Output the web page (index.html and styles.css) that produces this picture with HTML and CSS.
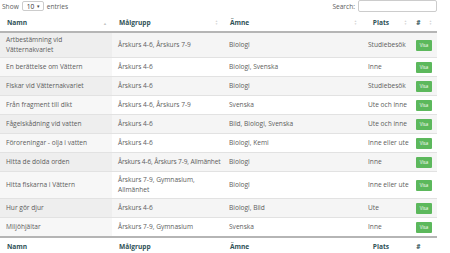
FILE: index.html
```html
<!DOCTYPE html>
<html lang="sv">
<head>
<meta charset="utf-8">
<link rel="stylesheet" href="styles.css">
</head>
<body>
<div class="wrap">
  <div class="top">
    <label class="len">Show <span class="sel">10 <span class="caret">&#9662;</span></span> entries</label>
    <label class="search">Search: <span class="inp"></span></label>
  </div>
  <table class="tbl">
    <colgroup><col class="c1"><col class="c2"><col class="c3"><col class="c4"><col class="c5"></colgroup>
    <thead>
      <tr>
        <th><span class="th">Namn</span><span class="sort asc">&#9650;</span></th>
        <th><span class="th">Målgrupp</span><span class="sort both"><i>&#9650;</i><i>&#9660;</i></span></th>
        <th><span class="th">Ämne</span><span class="sort both"><i>&#9650;</i><i>&#9660;</i></span></th>
        <th class="ctr"><span class="th">Plats</span><span class="sort both"><i>&#9650;</i><i>&#9660;</i></span></th>
        <th class="ctr"><span class="th">#</span><span class="sort both"><i>&#9650;</i><i>&#9660;</i></span></th>
      </tr>
    </thead>
    <tbody>
      <tr class="odd"><td>Artbestämning vid Vätternakvariet</td><td>Årskurs 4-6, Årskurs 7-9</td><td>Biologi</td><td>Studiebesök</td><td><span class="btn">Visa</span></td></tr>
      <tr class="even"><td>En berättelse om Vättern</td><td>Årskurs 4-6</td><td>Biologi, Svenska</td><td>Inne</td><td><span class="btn">Visa</span></td></tr>
      <tr class="odd"><td>Fiskar vid Vätternakvariet</td><td>Årskurs 4-6</td><td>Biologi</td><td>Studiebesök</td><td><span class="btn">Visa</span></td></tr>
      <tr class="even"><td>Från fragment till dikt</td><td>Årskurs 4-6, Årskurs 7-9</td><td>Svenska</td><td>Ute och inne</td><td><span class="btn">Visa</span></td></tr>
      <tr class="odd"><td>Fågelskådning vid vatten</td><td>Årskurs 4-6</td><td>Bild, Biologi, Svenska</td><td>Ute och inne</td><td><span class="btn">Visa</span></td></tr>
      <tr class="even"><td>Föroreningar - olja i vatten</td><td>Årskurs 4-6</td><td>Biologi, Kemi</td><td>Inne eller ute</td><td><span class="btn">Visa</span></td></tr>
      <tr class="odd"><td>Hitta de dolda orden</td><td class="nw">Årskurs 4-6, Årskurs 7-9, Allmänhet</td><td>Biologi</td><td>Inne</td><td><span class="btn">Visa</span></td></tr>
      <tr class="even tall"><td>Hitta fiskarna i Vättern</td><td>Årskurs 7-9, Gymnasium, Allmänhet</td><td>Biologi</td><td>Inne eller ute</td><td><span class="btn">Visa</span></td></tr>
      <tr class="odd"><td>Hur gör djur</td><td>Årskurs 4-6</td><td>Biologi, Bild</td><td>Ute</td><td><span class="btn">Visa</span></td></tr>
      <tr class="even"><td>Miljöhjältar</td><td>Årskurs 7-9, Gymnasium</td><td>Svenska</td><td>Inne</td><td><span class="btn">Visa</span></td></tr>
    </tbody>
    <tfoot>
      <tr><th>Namn</th><th>Målgrupp</th><th>Ämne</th><th class="ctr">Plats</th><th class="ctr">#</th></tr>
    </tfoot>
  </table>
</div>
</body>
</html>
```
FILE: styles.css
```css
html, body { margin: 0; padding: 0; background: #fff; }
body {
  font-family: "Open Sans", "Noto Sans", sans-serif;
  font-size: 6.6px;
  color: #5c5c5c;
}
.wrap { padding: 0 13px 0 0; }
.top {
  display: flex;
  justify-content: space-between;
  align-items: center;
  height: 12px;
  margin-bottom: 3px;
}
.len { display: flex; align-items: center; gap: 3px; padding-left: 2px; }
.sel {
  display: inline-flex;
  align-items: center;
  justify-content: space-between;
  width: 22px;
  height: 10px;
  box-sizing: border-box;
  border: 1px solid #ccc;
  border-radius: 2px;
  padding: 0 3px 0 4px;
  color: #333;
  background: #fff;
}
.caret { font-size: 5px; color: #444; }
.search { display: flex; align-items: center; gap: 3px; }
.inp {
  display: inline-block;
  width: 79px;
  height: 12px;
  box-sizing: border-box;
  border: 1px solid #ccc;
  border-radius: 2px;
}
.tbl {
  width: 437px;
  border-collapse: collapse;
  table-layout: fixed;
}
.c1 { width: 112px; }
.c2 { width: 111px; }
.c3 { width: 139px; }
.c4 { width: 50px; }
.c5 { width: 25px; }
thead th {
  position: relative;
  text-align: left;
  font-weight: 700;
  color: #2f5257;
  padding: 4px 14px 4px 7px;
  height: 8px;
  line-height: 8px;
  border-bottom: 2px solid #b5b5b5;
}
thead th.ctr { text-align: center; padding-left: 0; padding-right: 12px; }
.sort {
  position: absolute;
  right: 5px;
  top: 50%;
  transform: translateY(-50%);
  color: #d3d3d3;
  font-size: 3px;
  line-height: 3px;
  display: flex;
  flex-direction: column;
}
.sort.asc { color: #c4c4c4; font-size: 4px; }
.sort i { font-style: normal; display: block; }
tbody td {
  padding: 2px 0 2px 6px;
  line-height: 10px;
  vertical-align: middle;
  border-top: 1px solid #e2e2e2;
}
tbody tr:first-child td { border-top: none; }
tbody tr.tall td { padding-top: 3px; padding-bottom: 3px; }
tbody td:nth-child(1) { padding-right: 14px; }
tbody td.nw { white-space: nowrap; letter-spacing: -0.15px; }
tbody td:nth-child(4) { padding-left: 6px; padding-right: 1px; }
tbody td:nth-child(5) { padding: 2px 2px 2px 4px; }
tr.odd td { background: #f5f5f5; }
tr.odd td:first-child { background: #eeeeee; }
tr.even td { background: #fff; }
tr.even td:first-child { background: #f7f7f7; }
.btn {
  display: flex;
  align-items: center;
  justify-content: center;
  width: 16px;
  height: 11px;
  margin: 1.5px 0;
  background: #5cb85c;
  color: #fff;
  font-size: 4.5px;
  line-height: 11px;
  border-radius: 1px;
}
tfoot th {
  text-align: left;
  font-weight: 700;
  color: #2f5257;
  padding: 5px 7px;
  line-height: 8px;
  border-top: 2px solid #b5b5b5;
}
tfoot th.ctr { text-align: center; padding-left: 0; padding-right: 12px; }
```
